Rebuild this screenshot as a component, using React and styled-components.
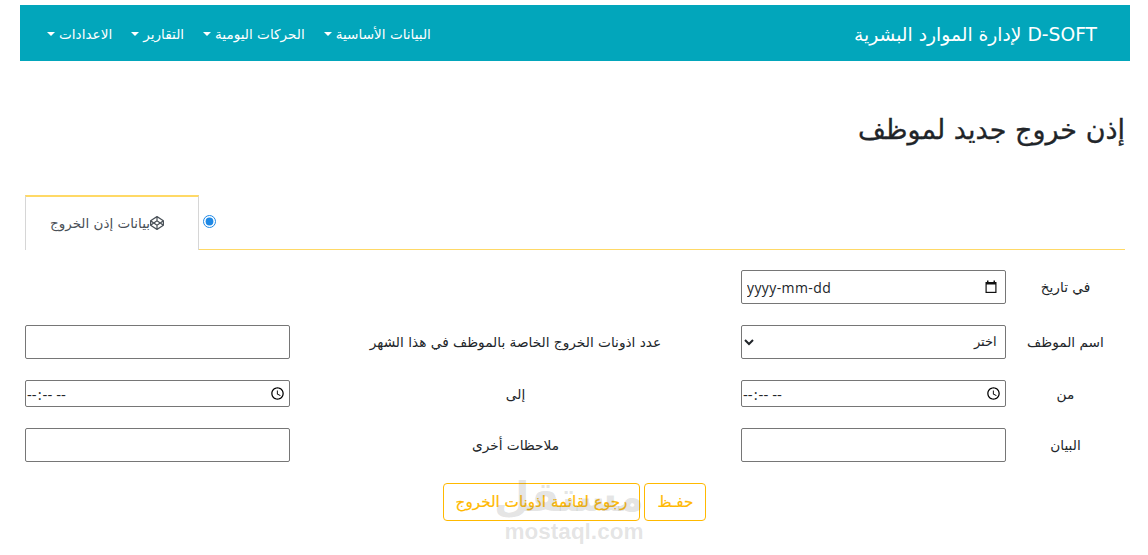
import styled, { createGlobalStyle } from "styled-components";
import { FaCodepen } from "react-icons/fa";

const GlobalStyle = createGlobalStyle`
  html, body {
    margin: 0;
    padding: 0;
    background: #fff;
  }
  body {
    font-family: "DejaVu Sans", "Liberation Sans", sans-serif;
    color: #212529;
  }
`;

const menuItems = ["البيانات الأساسية", "الحركات اليومية", "التقارير", "الاعدادات"];

export default function App() {
  return (
    <Page>
      <GlobalStyle />
      <TopBar dir="rtl">
        <Brand>D-SOFT لإدارة الموارد البشرية</Brand>
        <Menu>
          {menuItems.map((item) => (
            <MenuItem key={item}>
              {item}
              <Caret />
            </MenuItem>
          ))}
        </Menu>
      </TopBar>

      <Title dir="rtl">إذن خروج جديد لموظف</Title>

      <Tabs>
        <ActiveTab dir="rtl">
          <FaCodepen size={14} />
          <span>بيانات إذن الخروج</span>
        </ActiveTab>
        <TabRadio type="radio" defaultChecked name="tab" />
      </Tabs>

      <FormGrid dir="rtl">
        <Label>في تاريخ</Label>
        <DateBox dir="ltr">
          <DateText placeholder="yyyy-mm-dd" />
          <svg width="14" height="14" viewBox="0 0 14 14">
            <path d="M3 0.5h1.5v1.5h5V0.5H11v1.5h1.5v11h-11V2H3z" fill="#111" />
            <rect x="2.7" y="4.5" width="8.6" height="7.3" fill="#fff" />
          </svg>
        </DateBox>
        <span />
        <span />

        <Label>اسم الموظف</Label>
        <SelectField defaultValue="">
          <option value="">اختر</option>
        </SelectField>
        <Label>عدد اذونات الخروج الخاصة بالموظف في هذا الشهر</Label>
        <TextField />

        <Label>من</Label>
        <TimeField type="time" dir="ltr" />
        <Label>إلى</Label>
        <TimeField type="time" dir="ltr" />

        <Label>البيان</Label>
        <TextField />
        <Label>ملاحظات أخرى</Label>
        <TextField />
      </FormGrid>

      <Actions dir="rtl">
        <OutlineButton>حفـظ</OutlineButton>
        <OutlineButton>رجوع لقائمة اذونات الخروج</OutlineButton>
      </Actions>

      <Watermark>
        <WatermarkLogo dir="rtl">مستقل</WatermarkLogo>
        <WatermarkUrl>mostaql.com</WatermarkUrl>
      </Watermark>
    </Page>
  );
}

const Page = styled.div`
  position: relative;
  width: 1148px;
  height: 555px;
  overflow: hidden;
  padding-top: 5px;
  box-sizing: border-box;
`;

const TopBar = styled.header`
  margin: 0 18px 0 20px;
  height: 56px;
  box-sizing: border-box;
  background: #02a6bb;
  color: #fff;
  display: flex;
  align-items: center;
  justify-content: space-between;
  padding: 2px 33px 0 27px;
`;

const Brand = styled.div`
  font-size: 18.7px;
`;

const Menu = styled.nav`
  display: flex;
  gap: 19px;
`;

const MenuItem = styled.a`
  display: flex;
  align-items: center;
  gap: 4px;
  font-size: 13.6px;
  color: #fff;
`;

const Caret = styled.i`
  width: 0;
  height: 0;
  border-top: 4px solid #fff;
  border-left: 4px solid transparent;
  border-right: 4px solid transparent;
`;

const Title = styled.h1`
  margin: 49px 23px 0 0;
  font-size: 27px;
  font-weight: 500;
  line-height: 40px;
  height: 40px;
  -webkit-text-stroke: 0.3px #212529;
`;

const Tabs = styled.div`
  margin: 45px 23px 0 25px;
  height: 54px;
  display: flex;
  align-items: flex-start;
  border-bottom: 1px solid #ffd966;
`;

const ActiveTab = styled.div`
  box-sizing: border-box;
  width: 174px;
  height: 55px;
  padding: 0 34px 2px 0;
  background: #fff;
  border-left: 1px solid #d6d6d6;
  border-right: 1px solid #d6d6d6;
  border-top: 2px solid #ffd966;
  display: flex;
  align-items: center;
  font-size: 13.5px;
  color: #495057;
`;

const TabRadio = styled.input`
  margin: 20px 0 0 4px;
  width: 13px;
  height: 13px;
  accent-color: #1e88e5;
`;

const FormGrid = styled.div`
  margin: 20px 23px 0 25px;
  display: grid;
  grid-template-columns: 119px 265px 451px 265px;
  row-gap: 21px;
  align-items: center;
`;

const Label = styled.label`
  text-align: center;
  font-size: 13.7px;
`;

const fieldBase = `
  box-sizing: border-box;
  width: 265px;
  border: 1px solid #767676;
  border-radius: 2px;
  background: #fff;
  font-size: 13px;
  color: #212529;
`;

const TextField = styled.input`
  ${fieldBase}
  height: 34px;
`;

const DateBox = styled.div`
  ${fieldBase}
  height: 34px;
  display: flex;
  align-items: center;
  padding: 0 7px 0 5px;
`;

const DateText = styled.input`
  flex: 1;
  min-width: 0;
  border: 0;
  outline: 0;
  padding: 0;
  background: transparent;
  font-family: "Open Sans", sans-serif;
  font-size: 14px;
  letter-spacing: 0.4px;
  &::placeholder {
    color: #212529;
    opacity: 1;
  }
`;

const TimeField = styled.input`
  ${fieldBase}
  height: 27px;
  padding: 0;
  font-family: "Open Sans", sans-serif;
  font-size: 15px;
  &::-webkit-datetime-edit {
    letter-spacing: 0.5px;
  }
`;

const SelectField = styled.select`
  ${fieldBase}
  height: 34px;
  font-size: 12.5px;
  padding-right: 4px;
`;

const Actions = styled.div`
  margin-top: 21px;
  padding-left: 1px;
  display: flex;
  justify-content: center;
  gap: 4px;
`;

const OutlineButton = styled.button`
  height: 38px;
  padding: 0 12px;
  border: 1px solid #ffb900;
  border-radius: 4px;
  background: transparent;
  color: #ffb900;
  font-family: "DejaVu Sans", sans-serif;
  font-size: 15.2px;
  -webkit-text-stroke: 0.2px #ffb900;
`;

const Watermark = styled.div`
  position: absolute;
  left: 504px;
  top: 472px;
  width: 140px;
  text-align: center;
  color: rgba(120, 120, 120, 0.2);
  pointer-events: none;
`;

const WatermarkLogo = styled.div`
  font-size: 41px;
  font-weight: 700;
  line-height: 50px;
`;

const WatermarkUrl = styled.div`
  font-family: "Liberation Sans", sans-serif;
  font-size: 22.5px;
  font-weight: 700;
  line-height: 20px;
`;
